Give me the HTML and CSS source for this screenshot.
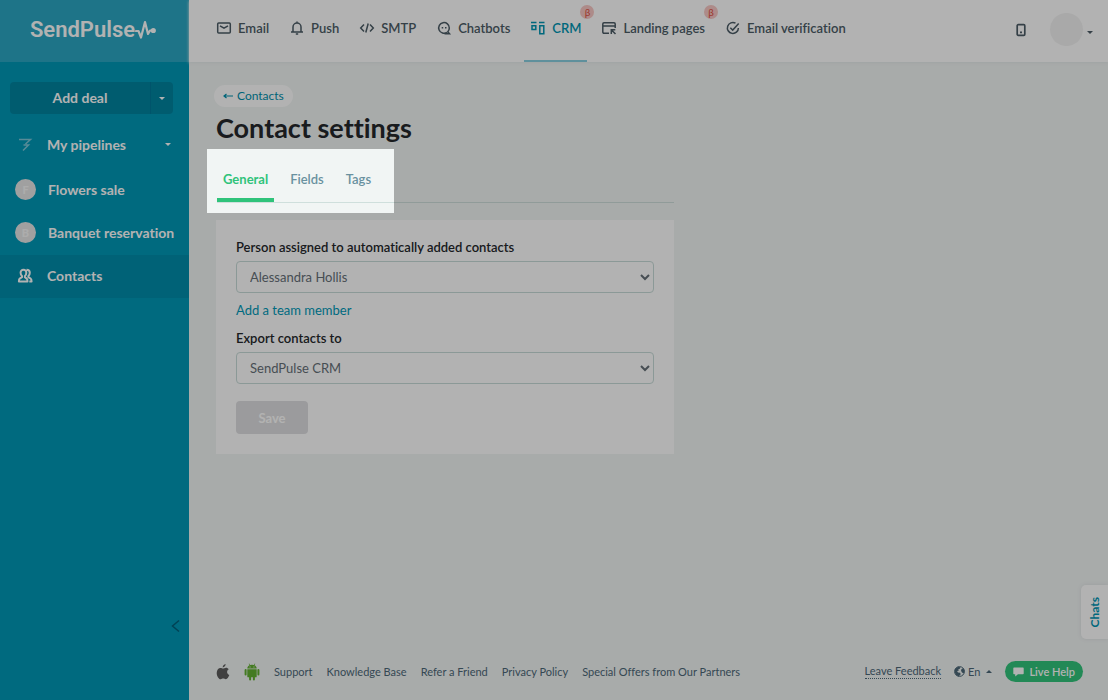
FILE: index.html
```html
<!DOCTYPE html>
<html lang="en">
<head>
<meta charset="utf-8">
<meta name="viewport" content="width=device-width, initial-scale=1">
<title>Contact settings</title>
<link rel="stylesheet" href="styles.css">
</head>
<body>
<div class="app">
  <aside class="sidebar">
    <a class="logo" href="#"><span>SendPulse</span><svg width="21" height="20" viewBox="0 0 21 20" fill="none" stroke="currentColor" stroke-width="2.200" stroke-linejoin="round" stroke-linecap="round"><path d="M1 11h2.500l2.500 6.500L10 2l3 12 2-3.500H18"/><circle cx="18.300" cy="10.500" r="1.500" fill="currentColor"/></svg></a>
    <div class="split">
      <button class="split-main" type="button">Add deal</button>
      <button class="split-more" type="button" aria-label="More"><i class="caret"></i></button>
    </div>
    <nav class="menu">
      <a class="item item-first" href="#"><svg class="item-icon" width="20" height="16" viewBox="0 0 20 16" fill="none" stroke="#7fc8d9" stroke-width="1.500"><path d="M4 2.500h11.500l-5 4.500M8.500 8h5L8 13.500"/></svg><span>My pipelines</span><i class="caret"></i></a>
      <a class="item" href="#"><b class="dot">F</b><span>Flowers sale</span></a>
      <a class="item" href="#"><b class="dot">B</b><span>Banquet reservation</span></a>
      <a class="item item-active" href="#"><svg class="item-icon" width="20" height="16" viewBox="0 0 20 16" fill="none" stroke="#fff" stroke-width="2" stroke-linejoin="round"><path d="M8.500 1.800C6.600 1.800 5.600 3 5.600 4.800c0 1.500.6 2.600 1.400 3.200v1.200L4.700 10.600C4.100 11 3.900 12.200 3.900 13.500h8.600c0-1.400-.2-2.500-.8-2.900L9.900 9.200V8c.8-.6 1.400-1.700 1.400-3.200 0-1.800-.9-3-2.800-3zM11.500 1.800c2 0 3.300 1.100 3.300 3 0 1.500-.6 2.600-1.400 3.300v1l2.200 1.400c.7.500 1 1.700 1 3h-2.300"/></svg><span>Contacts</span></a>
    </nav>
    <button class="collapse" type="button" aria-label="Collapse menu"><svg width="10" height="14" viewBox="0 0 10 14" fill="none" stroke="currentColor" stroke-width="1.500"><path d="M8 1.500 1.500 7 8 12.500"/></svg></button>
  </aside>

  <div class="page">
    <header class="topbar">
      <nav class="services">
        <a href="#"><svg width="16" height="16" viewBox="0 0 16 16"><rect x="1.700" y="3" width="12.600" height="10" rx="1"/><path d="m4 5.800 4 2.400 4-2.400"/></svg>Email</a>
        <a href="#"><svg width="16" height="16" viewBox="0 0 16 16"><path d="M2 12h12M4 12V7a4 4 0 0 1 8 0v5M8 3V1.500M6.800 14h2.400"/></svg>Push</a>
        <a href="#"><svg width="16" height="16" viewBox="0 0 16 16"><path d="M5 4.500 1.700 8 5 11.500M11 4.500 14.300 8 11 11.500M9.200 3.500l-2.400 9"/></svg>SMTP</a>
        <a href="#"><svg width="16" height="16" viewBox="0 0 16 16"><path d="M11 12.300A5.300 5.300 0 1 1 13.300 8c0 1.500-.6 2.800-1.500 3.700l1.700 2.100H8.500M5.700 7.800h1.500M9 7.800h1.500"/></svg>Chatbots</a>
        <a class="current" href="#"><svg width="16" height="16" viewBox="0 0 16 16"><path d="M1 2.500h5.500M9 2.500h5.500M2 5.700h3.800v3.700H2zM9.800 5.700h4v8h-4z"/></svg>CRM<sup class="beta">β</sup></a>
        <a href="#"><svg width="16" height="16" viewBox="0 0 16 16"><path d="M8 13.200H3a1.200 1.200 0 0 1-1.200-1.200V4A1.200 1.200 0 0 1 3 2.800h10A1.200 1.200 0 0 1 14.200 4v4M2 6h12M10.300 14V9.700h4M10.500 10l4 4"/></svg>Landing pages<sup class="beta">β</sup></a>
        <a href="#"><svg width="16" height="16" viewBox="0 0 16 16"><path d="M10.500 3.100A5.500 5.500 0 1 0 13.400 8M5.300 7.800l2.400 2.300 6-6.600"/></svg>Email verification</a>
      </nav>
      <div class="account">
        <a class="phone" href="#" aria-label="Mobile app"><svg width="10" height="14" viewBox="0 0 10 14"><rect x="1.200" y="1.700" width="7.600" height="10.600" rx="1" fill="none" stroke="currentColor" stroke-width="1.700"/><path d="M4 8.500h2v1.800H4z" fill="currentColor"/></svg></a>
        <button class="avatar" type="button" aria-label="Account"></button>
        <i class="caret"></i>
      </div>
    </header>

    <main class="content">
      <a class="back" href="#"><svg width="10" height="8" viewBox="0 0 10 8" fill="none" stroke="currentColor" stroke-width="1.200"><path d="M10 4H1M3.500 2 1 4l2.500 2"/></svg>Contacts</a>
      <h1>Contact settings</h1>
      <nav class="tabs">
        <a class="tab tab-on" href="#">General</a>
        <a class="tab" href="#">Fields</a>
        <a class="tab" href="#">Tags</a>
        <div class="spotlight"></div>
      </nav>
      <form class="card">
        <label for="person">Person assigned to automatically added contacts</label>
        <select id="person"><option>Alessandra Hollis</option></select>
        <a class="add" href="#">Add a team member</a>
        <label for="export">Export contacts to</label>
        <select id="export"><option>SendPulse CRM</option></select>
        <button class="save" type="button">Save</button>
      </form>
    </main>

    <footer class="footer">
      <a class="store" href="#" aria-label="iOS app"><svg width="14" height="16" viewBox="0 0 14 16" fill="#5c5c5c"><path d="M9.600 0c.1 1.800-1.200 3.300-2.900 3.400C6.500 1.700 8 .2 9.600 0zM7 4.500c.8 0 1.700-.8 3-.8 1.100 0 2.200.6 2.800 1.600-2.500 1.400-2.100 4.700.5 5.700-.5 1.500-1.900 4.200-3.500 4.200-1 0-1.500-.6-2.600-.6s-1.600.6-2.500.6C2.600 15.200.7 11.700.7 8.900c0-3.100 1.900-5 3.700-5 1.200 0 2 .6 2.600.6z"/></svg></a>
      <a class="store" href="#" aria-label="Android app"><svg width="16" height="18" viewBox="0 0 16 18" fill="#62b031"><path d="M3.300 5.500C3.400 3.900 4.300 2.900 5.500 2.300L4.700.7l.5-.3.9 1.700a6 6 0 0 1 3.800 0l.9-1.700.5.3-.8 1.600c1.200.6 2.100 1.600 2.200 3.200zM3.300 6.200h9.400v7.200c0 .5-.4.900-.9.900h-.9v2.200a1 1 0 0 1-2 0v-2.200H7.100v2.200a1 1 0 0 1-2 0v-2.200h-.9a.9.900 0 0 1-.9-.9z"/><rect x=".6" y="6" width="2" height="6.500" rx="1"/><rect x="13.400" y="6" width="2" height="6.500" rx="1"/><path fill="#f1f5f6" d="M5.600 3.600h.9v.9h-.9zM9.500 3.600h.9v.9h-.9z"/></svg></a>
      <a href="#">Support</a>
      <a href="#">Knowledge Base</a>
      <a href="#">Refer a Friend</a>
      <a href="#">Privacy Policy</a>
      <a href="#">Special Offers from Our Partners</a>
      <div class="footer-end">
        <a class="feedback" href="#">Leave Feedback</a>
        <button class="lang" type="button"><svg width="11" height="11" viewBox="0 0 11 11"><circle cx="5.500" cy="5.500" r="4.900" fill="none" stroke="currentColor"/><path fill="currentColor" d="M1 3 4 .7l2.500.5-.7 1.500-1.600.7.6 1.400-1.700.3L4 6.500l2.100.3.6 1.500-2 2.200L2 9 .8 6.500zM7.500 3l2-.8L10.600 5l-.9 2.500L8 6.500 7 4.800z"/></svg>En<i class="caret caret-up"></i></button>
        <button class="help" type="button"><svg width="11" height="10" viewBox="0 0 11 10" fill="currentColor"><path d="M1 .5h9a.7.700 0 0 1 .7.700v5.300a.7.700 0 0 1-.7.700H5L2.200 9.500V7.200H1a.7.700 0 0 1-.7-.7V1.200A.7.700 0 0 1 1 .5z"/></svg>Live Help</button>
      </div>
    </footer>
  </div>
  <button class="chats" type="button">Chats</button>
</div>
</body>
</html>
```
FILE: styles.css
```css
* { box-sizing: border-box; }
body {
  margin: 0;
  background: #f1f5f4;
  color: #25282b;
  font-family: Lato, "Noto Sans", sans-serif;
  font-size: 13px;
  font-variant-ligatures: none;
  line-height: 18px;
}
a { color: inherit; text-decoration: none; }
button { font: inherit; border: 0; padding: 0; background: none; color: inherit; cursor: pointer; }
svg { flex: none; display: block; }

.app { display: flex; min-height: 100vh; position: relative; overflow: hidden; }
.caret {
  width: 0;
  height: 0;
  border: 3px solid transparent;
  border-top-color: currentColor;
  border-bottom-width: 0;
}
.caret-up { margin-left: 3px; border-top-width: 0; border-bottom: 3px solid currentColor; }

/* Sidebar */
.sidebar {
  flex: 0 0 189px;
  min-width: 0;
  display: flex;
  flex-direction: column;
  background: #0098b7;
  color: #fff;
  font-size: 14px;
  font-weight: 700;
}
.logo {
  height: 62px;
  display: flex;
  align-items: center;
  justify-content: center;
  padding: 0 3px 3px 0;
  background: #2ba7c3;
  font-family: Roboto, sans-serif;
  font-size: 22px;
  font-weight: 600;
}
.split { display: flex; margin: 20px 16px 0 10px; height: 32px; border-radius: 4px; background: #0084a0; }
.split-main { flex: 1; border-right: 1px solid #00799a; }
.split-more { width: 22px; display: flex; align-items: center; justify-content: center; }
.menu { margin-top: 10px; }
.item { display: flex; align-items: center; height: 43px; padding: 0 12px 2px 15px; gap: 12px; white-space: nowrap; }
.item-first { margin-bottom: 2px; }
.item .caret { margin: 0 6px 0 auto; }
.dot {
  flex: none;
  width: 21px;
  height: 21px;
  border-radius: 50%;
  background: #e6e6e6;
  color: #f7f7f7;
  font-size: 11px;
  line-height: 21px;
  text-align: center;
}
.item-active { background: #008dab; }
.collapse { margin: auto 8px 67px auto; color: #00607a; }

/* Top bar */
.page { flex: 1; min-width: 0; display: flex; flex-direction: column; }
.topbar {
  height: 62px;
  display: flex;
  justify-content: space-between;
  background: #fff;
  box-shadow: 0 1px 3px #e4eaea;
  color: #4c5c66;
}
.services { display: flex; gap: 8px; padding-left: 21px; font-weight: 600; }
.services a { position: relative; display: flex; align-items: center; gap: 6px; padding: 0 6px 7px; white-space: nowrap; }
.services svg { fill: none; stroke: currentColor; stroke-width: 1.5px; }
.services .current { color: #0095b3; box-shadow: inset 0 -2px #88cfe0; }
.beta {
  position: absolute;
  top: 5px;
  right: -7px;
  width: 14px;
  height: 14px;
  border-radius: 50%;
  background: #f8c8c4;
  color: #e04f43;
  font-size: 10px;
  font-weight: 400;
  line-height: 14px;
  text-align: center;
}
.account { display: flex; align-items: center; padding: 0 15px 3px 0; gap: 4px; }
.phone { margin-right: 20px; }
.avatar { width: 33px; height: 33px; border-radius: 50%; background: #f3f3f3; }
.account .caret { margin-top: 6px; }

/* Content */
.content { flex: 1; padding: 23px 27px; max-width: 512px; }
.back {
  display: flex;
  align-items: center;
  gap: 4px;
  width: max-content;
  margin-left: -2px;
  padding: 0 9px;
  border-radius: 11px;
  background: #fff;
  color: #0090ad;
  font-size: 12px;
  line-height: 22px;
}
h1 { margin: 3px 0 0; font-size: 27px; line-height: 36px; font-weight: 700; }
.tabs {
  position: relative;
  display: flex;
  gap: 10px;
  margin: 14px 0 17px 1px;
  border-bottom: 1px solid #cfdfdc;
  color: #69919f;
  font-weight: 600;
}
.tab { padding: 10px 6px; border-bottom: 4px solid transparent; }
.tab-on { border-color: #2fc37a; color: #2fc37a; font-weight: 700; }
.spotlight {
  position: absolute;
  top: -11px;
  left: -10px;
  bottom: -11px;
  width: 187px;
  z-index: 20;
  pointer-events: none;
  box-shadow: 0 0 0 2000px rgba(0, 0, 0, .3);
}

.card { display: flex; flex-direction: column; align-items: flex-start; padding: 18px 20px 20px; background: #fff; }
.card label { font-weight: 600; }
select {
  width: 100%;
  height: 32px;
  margin: 5px 0 8px;
  padding: 0 0 0 9px;
  border: 1px solid #c8dcd8;
  border-radius: 4px;
  background: #fff;
  color: #667078;
  font: inherit;
}
.add { margin-bottom: 10px; color: #0099b8; }
.save { width: 72px; height: 33px; margin-top: 9px; border-radius: 4px; background: #dfdfe1; color: #fff; font-weight: 700; }

/* Footer */
.footer {
  display: flex;
  align-items: center;
  gap: 14px;
  padding: 0 25px 18px 27px;
  color: #4d6878;
  font-size: 11px;
  white-space: nowrap;
}
.footer-end { display: flex; align-items: center; gap: 13px; margin-left: auto; }
.feedback { line-height: 14px; border-bottom: 1px dotted currentColor; }
.lang { display: flex; align-items: center; gap: 3px; }
.help {
  display: flex;
  align-items: center;
  gap: 5px;
  height: 21px;
  padding: 0 8px;
  border-radius: 11px;
  background: #32c57b;
  color: #fff;
  font-weight: 600;
}
.chats {
  position: absolute;
  right: 0;
  bottom: 61px;
  width: 27px;
  height: 54px;
  border-radius: 5px 0 0 5px;
  background: #fff;
  box-shadow: 0 0 4px #dde0e2;
  color: #0095b3;
  font-size: 12px;
  font-weight: 700;
  writing-mode: sideways-lr;
}
```
